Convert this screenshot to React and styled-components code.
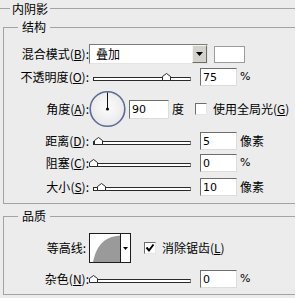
import React from "react";
import styled, { createGlobalStyle } from "styled-components";

const GlobalStyle = createGlobalStyle`
  html, body {
    margin: 0;
    padding: 0;
    background: #ececec;
  }
  body {
    font-family: "Noto Sans CJK SC", "Liberation Sans", sans-serif;
    font-size: 12px;
    color: #000;
  }
`;

const Panel = styled.div`
  width: 295px;
  height: 298px;
  overflow: hidden;
  background: #ececec;
`;

const Heading = styled.div`
  display: flex;
  align-items: center;
  gap: 2px;
  height: 17px;
  line-height: 17px;

  &::before,
  &::after {
    content: "";
    border-top: 1px solid #a3a3a3;
  }
  &::before {
    width: 10px;
  }
  &::after {
    flex: 1;
  }
`;

const Group = styled.fieldset`
  margin: ${(p) => p.$mt}px 0 0 3px;
  padding: 0 0 ${(p) => p.$pb}px 0;
  width: 310px;
  min-width: 0;
  box-sizing: border-box;
  border: 1px solid #a3a3a3;
`;

const Legend = styled.legend`
  margin-left: 14px;
  padding: 0 4px;
  line-height: 14px;
  font-size: 12px;
`;

const Row = styled.div`
  display: flex;
  align-items: center;
  height: ${(p) => p.$h}px;
  margin-top: ${(p) => p.$mt}px;
`;

const Label = styled.span`
  flex: none;
  width: 85px;
  padding-right: ${(p) => p.$pr || 0}px;
  box-sizing: border-box;
  text-align: right;
  white-space: nowrap;
  line-height: 16px;
`;

const Key = styled.span`
  text-decoration: underline;
`;

const Select = styled.div`
  display: flex;
  width: 119px;
  height: 20px;
  box-sizing: border-box;
  border: 1px solid;
  border-color: #7c7c7c #e4e4e4 #e4e4e4 #7c7c7c;
  background: #fff;
`;

const SelectText = styled.span`
  flex: 1;
  padding-left: 6px;
  line-height: 18px;
`;

const SelectButton = styled.span`
  display: flex;
  align-items: center;
  justify-content: center;
  width: 15px;
  background: #d4d3cb;
  border: 1px solid;
  border-color: #f4f4f0 #6f6f68 #6f6f68 #f4f4f0;
  box-sizing: border-box;
`;

const Swatch = styled.div`
  margin-left: 6px;
  width: 31px;
  height: 17px;
  box-sizing: border-box;
  border: 1px solid #9c9c9c;
  background: #fff;
`;

const Slider = styled.div`
  position: relative;
  display: flex;
  align-items: flex-end;
  margin-left: 4px;
  width: 98px;
  height: 8px;
  flex: none;
`;

const Track = styled.div`
  width: 100%;
  height: 4px;
  box-sizing: border-box;
  background: #fff;
  border: 1px solid;
  border-color: #2a2a2a #8a8a8a #2a2a2a #2a2a2a;
`;

const Thumb = styled.svg`
  position: absolute;
  bottom: 0;
  width: 9px;
  height: 8px;
`;

const Field = styled.input`
  margin-left: ${(p) => p.$ml}px;
  width: ${(p) => p.$w}px;
  height: ${(p) => p.$hh || 18}px;
  box-sizing: border-box;
  padding: 0 0 0 2px;
  border: 1px solid;
  border-color: #6e6e6e #dcdcdc #dcdcdc #6e6e6e;
  background: #fff;
  font-family: "DejaVu Sans", "Liberation Sans", sans-serif;
  font-size: 11px;
  color: #000;
  outline: none;
`;

const Unit = styled.span`
  margin-left: ${(p) => p.$ml || 3}px;
  font-family: ${(p) =>
    p.$latin ? '"DejaVu Sans", sans-serif' : '"Noto Sans CJK SC", sans-serif'};
  font-size: ${(p) => (p.$latin ? 11 : 12)}px;
  line-height: 16px;
`;

const Dial = styled.svg`
  width: 37px;
  height: 38px;
  flex: none;
`;

const Check = styled.span`
  display: flex;
  align-items: center;
  justify-content: center;
  margin-left: ${(p) => p.$ml}px;
  width: 12px;
  height: 12px;
  box-sizing: border-box;
  border: 1px solid;
  border-color: #6e6e6e #e6e6e6 #e6e6e6 #6e6e6e;
  background: #fff;
`;

const CheckText = styled.span`
  margin-left: 6px;
  white-space: nowrap;
  line-height: 16px;
`;

const Contour = styled.div`
  display: flex;
  width: 42px;
  height: 30px;
  box-sizing: border-box;
  border: 1px solid #1e1e1e;
  background: #fff;
`;

const ContourPreview = styled.svg`
  width: 30px;
  height: 28px;
  border-right: 1px solid #1e1e1e;
`;

const ContourArrow = styled.span`
  flex: 1;
  display: flex;
  align-items: center;
  justify-content: center;
`;

const Arrow = ({ w = 7, h = 4 }) => (
  <svg width={w} height={h} viewBox={`0 0 ${w} ${h}`}>
    <polygon points={`0,0 ${w},0 ${w / 2},${h}`} fill="#000" />
  </svg>
);

const RangeSlider = ({ pct }) => (
  <Slider>
    <Track />
    <Thumb viewBox="0 0 9 8" style={{ left: `${pct * 0.98 - 4.5}px` }}>
      <polygon
        points="0.5,7.5 0.5,3.5 4.5,0.5 8.5,3.5 8.5,7.5"
        fill="#fff"
        stroke="#2a2a2a"
        strokeWidth="1"
      />
    </Thumb>
  </Slider>
);

const SliderRow = ({ h, mt, label, k, pct, value, unit, latin }) => (
  <Row $h={h} $mt={mt}>
    <Label>
      {label}(<Key>{k}</Key>):
    </Label>
    <RangeSlider pct={pct} />
    <Field $ml={9} $w={37} readOnly value={value} />
    <Unit $latin={latin}>{unit}</Unit>
  </Row>
);

export default function App() {
  return (
    <Panel>
      <GlobalStyle />
      <Heading>内阴影</Heading>

      <Group $mt={3} $pb={6}>
        <Legend>结构</Legend>
        <Row $h={20} $mt={10}>
          <Label>
            混合模式(<Key>B</Key>):
          </Label>
          <Select>
            <SelectText>叠加</SelectText>
            <SelectButton>
              <Arrow />
            </SelectButton>
          </Select>
          <Swatch />
        </Row>
        <SliderRow h={18} mt={4} label="不透明度" k="O" pct={75} value="75" unit="%" latin />
        <Row $h={38} $mt={4}>
          <Label>
            角度(<Key>A</Key>):
          </Label>
          <Dial viewBox="0 0 37 38">
            <defs>
              <radialGradient id="dialFill" cx="0.5" cy="0.45" r="0.6">
                <stop offset="0" stopColor="#fdfdfd" />
                <stop offset="1" stopColor="#e6e6e6" />
              </radialGradient>
            </defs>
            <circle cx="18.5" cy="19" r="17.3" fill="url(#dialFill)" stroke="#5d6c98" strokeWidth="1.6" />
            <line x1="18.5" y1="19" x2="18.5" y2="2.5" stroke="#111" strokeWidth="1" />
            <circle cx="18.5" cy="19" r="1.6" fill="#111" />
          </Dial>
          <Field $ml={3} $w={40} $hh={19} readOnly value="90" />
          <Unit>度</Unit>
          <Check $ml={11} />
          <CheckText>
            使用全局光(<Key>G</Key>)
          </CheckText>
        </Row>
        <SliderRow h={20} mt={3} label="距离" k="D" pct={6} value="5" unit="像素" />
        <SliderRow h={20} mt={2} label="阻塞" k="C" pct={0} value="0" unit="%" latin />
        <SliderRow h={20} mt={4} label="大小" k="S" pct={9} value="10" unit="像素" />
      </Group>

      <Group $mt={5} $pb={6}>
        <Legend>品质</Legend>
        <Row $h={30} $mt={10}>
          <Label $pr={3}>等高线:</Label>
          <Contour>
            <ContourPreview viewBox="0 0 30 28">
              <path d="M3,28 C6,14 12,3 30,1.5 L30,28 Z" fill="#9a9a9a" />
            </ContourPreview>
            <ContourArrow>
              <Arrow w={5} h={3} />
            </ContourArrow>
          </Contour>
          <Check $ml={13}>
            <svg width="10" height="10" viewBox="0 0 10 10">
              <polyline points="1.5,4.5 4,7.5 8.5,1.5" fill="none" stroke="#000" strokeWidth="2" />
            </svg>
          </Check>
          <CheckText>
            消除锯齿(<Key>L</Key>)
          </CheckText>
        </Row>
        <SliderRow h={18} mt={7} label="杂色" k="N" pct={0} value="0" unit="%" latin />
      </Group>
    </Panel>
  );
}
